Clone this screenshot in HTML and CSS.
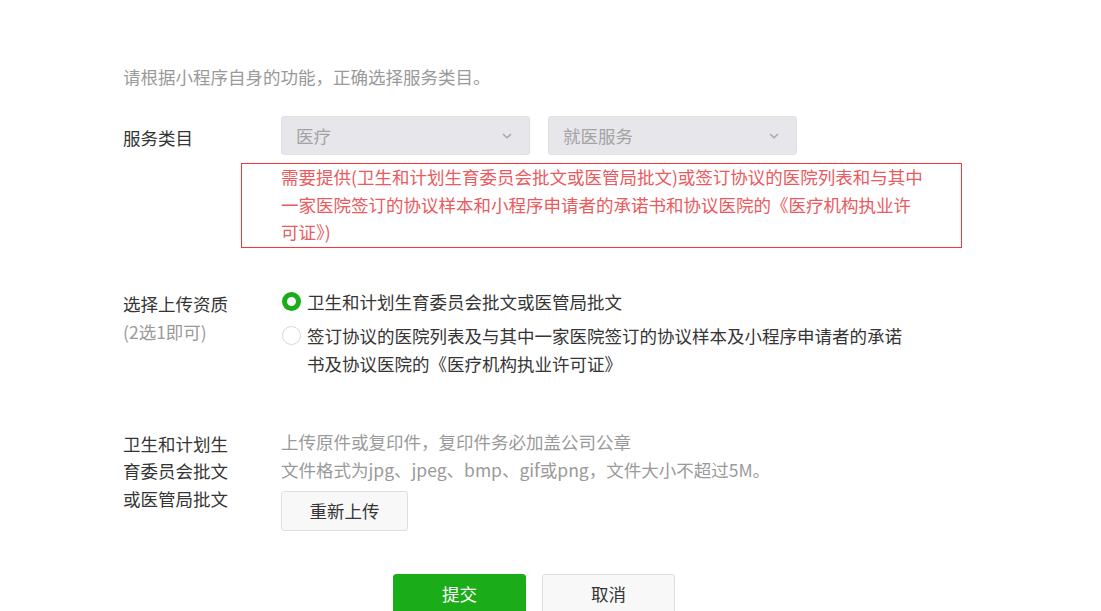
FILE: index.html
```html
<!DOCTYPE html>
<html lang="zh-CN">
<head>
<meta charset="utf-8">
<title>服务类目</title>
<link rel="stylesheet" href="styles.css">
</head>
<body>
<div class="page">
  <p class="intro">请根据小程序自身的功能，正确选择服务类目。</p>

  <div class="row row-category">
    <div class="label label-select">服务类目</div>
    <div class="content">
      <div class="selects">
        <div class="select">
          <span>医疗</span>
          <svg class="chev" width="10" height="6" viewBox="0 0 10 6"><path d="M1 1 L5 4.8 L9 1" fill="none" stroke="#a8a8a8" stroke-width="1.5"/></svg>
        </div>
        <div class="select">
          <span>就医服务</span>
          <svg class="chev" width="10" height="6" viewBox="0 0 10 6"><path d="M1 1 L5 4.8 L9 1" fill="none" stroke="#a8a8a8" stroke-width="1.5"/></svg>
        </div>
      </div>
      <div class="notice">
        <p class="notice-text">需要提供(卫生和计划生育委员会批文或医管局批文)或签订协议的医院列表和与其中一家医院签订的协议样本和小程序申请者的承诺书和协议医院的《医疗机构执业许可证》)</p>
      </div>
    </div>
  </div>

  <div class="row row-radio">
    <div class="label label-radio">选择上传资质<br><span class="sub">(2选1即可)</span></div>
    <div class="content">
      <div class="option">
        <span class="radio checked"></span>
        <span class="option-text">卫生和计划生育委员会批文或医管局批文</span>
      </div>
      <div class="option option-2">
        <span class="radio"></span>
        <span class="option-text">签订协议的医院列表及与其中一家医院签订的协议样本及小程序申请者的承诺书及协议医院的《医疗机构执业许可证》</span>
      </div>
    </div>
  </div>

  <div class="row row-upload">
    <div class="label label-upload">卫生和计划生<br>育委员会批文<br>或医管局批文</div>
    <div class="content">
      <p class="desc">上传原件或复印件，复印件务必加盖公司公章</p>
      <p class="desc">文件格式为jpg、jpeg、bmp、gif或png，文件大小不超过5M。</p>
      <button class="btn btn-default btn-upload">重新上传</button>
    </div>
  </div>

  <div class="actions">
    <button class="btn btn-primary">提交</button>
    <button class="btn btn-default">取消</button>
  </div>
</div>
</body>
</html>
```

FILE: styles.css
```css
* { box-sizing: border-box; }
html, body { margin: 0; padding: 0; background: #fff; }
body {
  font-family: "Noto Sans CJK SC", "Microsoft YaHei", sans-serif;
  font-size: 17.5px;
  color: #353535;
  overflow: hidden;
}
p { margin: 0; }
.page {
  padding: 63px 0 0 123px;
}
.intro {
  line-height: 28px;
  color: #9a9a9a;
}
.row {
  display: flex;
}
.label {
  width: 158px;
  flex: none;
  line-height: 28px;
}
.content { flex: none; }
.row-category { margin-top: 25px; }
.label-select { padding-top: 8px; }
.selects { display: flex; gap: 18px; }
.select {
  width: 249px;
  height: 39px;
  background: #e7e7eb;
  border: 1px solid #e0e0e3;
  border-radius: 3px;
  display: flex;
  align-items: center;
  justify-content: space-between;
  padding: 0 17px 0 14px;
  color: #a3a3a3;
  line-height: 1;
}
.chev { display: block; margin-top: 1px; }
.notice {
  margin-top: 8px;
  margin-left: -40px;
  width: 721px;
  border: 1px solid rgb(255, 51, 51);
  padding: 0 0 0 39px;
}
.notice-text {
  width: 642px;
  color: #ea5a5e;
  line-height: 27.5px;
  margin-top: -1px;
  padding-bottom: 1px;
}
.row-radio { margin-top: 40px; }
.label-radio { padding-top: 2px; }
.sub { color: #9a9a9a; }
.option {
  display: flex;
  align-items: flex-start;
  line-height: 28px;
}
.option-2 { margin-top: 6px; }
.radio {
  flex: none;
  width: 19px;
  height: 19px;
  border-radius: 50%;
  border: 1px solid #d9d9d9;
  margin: 4px 6px 0 1px;
  background: #fff;
}
.radio.checked {
  border: 5px solid #1aad19;
}
.option-text { width: 600px; }
.row-upload { margin-top: 50px; }
.label-upload { line-height: 27.5px; padding-top: 2px; }
.desc {
  line-height: 28px;
  color: #9a9a9a;
}
.btn {
  font-family: inherit;
  font-size: 17.5px;
  height: 40px;
  border-radius: 3px;
  cursor: pointer;
  padding: 0;
}
.btn-default {
  background: #f8f8f8;
  border: 1px solid #dfdfdf;
  color: #353535;
}
.btn-primary {
  background: #1aad19;
  border: 1px solid #1aad19;
  color: #fff;
}
.btn-upload {
  margin-top: 7px;
  width: 127px;
}
.actions {
  margin-top: 43px;
  padding-left: 270px;
  display: flex;
  gap: 16px;
}
.actions .btn { width: 133px; }
```
